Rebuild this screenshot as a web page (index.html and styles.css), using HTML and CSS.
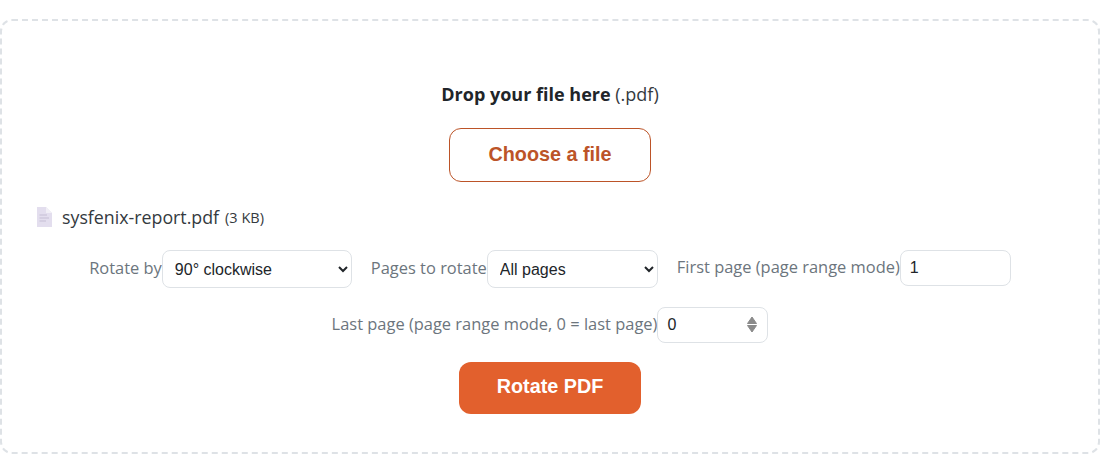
FILE: index.html
```html
<!DOCTYPE html>
<html lang="en">
<head>
<meta charset="utf-8">
<title>Rotate PDF</title>
<link rel="stylesheet" href="styles.css">
</head>
<body>
<form class="dropzone">
  <p class="drop-title"><strong>Drop your file here</strong> <span>(.pdf)</span></p>
  <button type="button" class="choose">Choose a file</button>
  <div class="file-row">
    <svg class="file-icon" viewBox="0 0 16 20" width="16" height="20" aria-hidden="true">
      <path d="M1 0H10L16 6V20H1Z" fill="#e3deee"/>
      <path d="M10 0L16 6H10Z" fill="#f1eff6"/>
      <path d="M3.500 8H11M3.500 11H13M3.500 14H10" stroke="#cfc9dd" stroke-width="1.500" fill="none"/>
    </svg>
    <span class="file-name">sysfenix-report.pdf</span>
    <span class="file-size">(3 KB)</span>
  </div>
  <div class="options">
    <label class="field"><span class="field-label">Rotate by</span>
      <select class="control select-angle"><option>90° clockwise</option></select>
    </label>
    <label class="field"><span class="field-label">Pages to rotate</span>
      <select class="control select-pages"><option>All pages</option></select>
    </label>
    <label class="field"><span class="field-label">First page (page range mode)</span>
      <input class="control number" type="text" value="1">
    </label>
    <label class="field"><span class="field-label">Last page (page range mode, 0 = last page)</span>
      <span class="spin-wrap">
        <input class="control number" type="text" value="0">
        <svg class="spinner" viewBox="0 0 10 17" width="10" height="17" aria-hidden="true">
          <path d="M5 1L9.500 7.500H.5Z M.5 9.500H9.500L5 16Z" fill="#8a8a8a" stroke="#8a8a8a" stroke-width="1" stroke-linejoin="round"/>
        </svg>
      </span>
    </label>
  </div>
  <button type="button" class="submit">Rotate PDF</button>
</form>
</body>
</html>
```
FILE: styles.css
```css
* { box-sizing: border-box; }
html, body { margin: 0; background: #fff; }
body { padding: 19px 0; font-family: "Open Sans", "Noto Sans", sans-serif; color: #212529; }
.dropzone {
  display: flex;
  flex-direction: column;
  align-items: center;
  height: 435px;
  padding: 59px 34px 0;
  border: 2px dashed #dee2e6;
  border-radius: 12px;
}
.drop-title { margin: 0; font-size: 18px; line-height: 28px; }
.drop-title strong { font-weight: 700; }
.drop-title span { color: #343a40; }
.choose {
  width: 202px;
  height: 54px;
  margin-top: 20px;
  padding: 0 0 2px;
  background: #fff;
  border: 1px solid #bc5428;
  border-radius: 12px;
  color: #bc5428;
  font: 700 19.800px "Liberation Sans", Arial, sans-serif;
}
.file-row { align-self: flex-start; display: flex; align-items: center; height: 24px; margin-top: 23px; }
.file-icon { margin-right: 10px; }
.file-name { font-size: 17.800px; color: #343a40; }
.file-size { font-size: 14.500px; color: #343a40; margin-left: 6px; }
.options {
  display: flex;
  flex-wrap: wrap;
  justify-content: center;
  align-self: stretch;
  column-gap: 19px;
  row-gap: 19px;
  margin-top: 21px;
}
.field { display: flex; align-items: center; height: 38px; font-size: 16.450px; color: #6c757d; white-space: nowrap; }
.field:nth-child(n+3) { height: 36px; }
.field-label { margin-bottom: 3px; }
.control {
  height: 38px;
  background: #fff;
  border: 1px solid #dee2e6;
  border-radius: 8px;
  color: #212529;
  font: 16px "Liberation Sans", Arial, sans-serif;
}
.select-angle { width: 190px; padding-left: 8px; }
.select-pages { width: 171px; padding-left: 8px; }
.number { width: 111px; height: 36px; padding: 0 9px; outline: none; }
.spin-wrap { position: relative; display: flex; }
.spinner { position: absolute; right: 11px; top: 9px; }
.submit {
  width: 182px;
  height: 52px;
  margin-top: 19px;
  padding: 0 0 4px;
  background: #e2602d;
  border: 0;
  border-radius: 12px;
  color: #fff;
  font: 700 19.800px "Liberation Sans", Arial, sans-serif;
}
```
